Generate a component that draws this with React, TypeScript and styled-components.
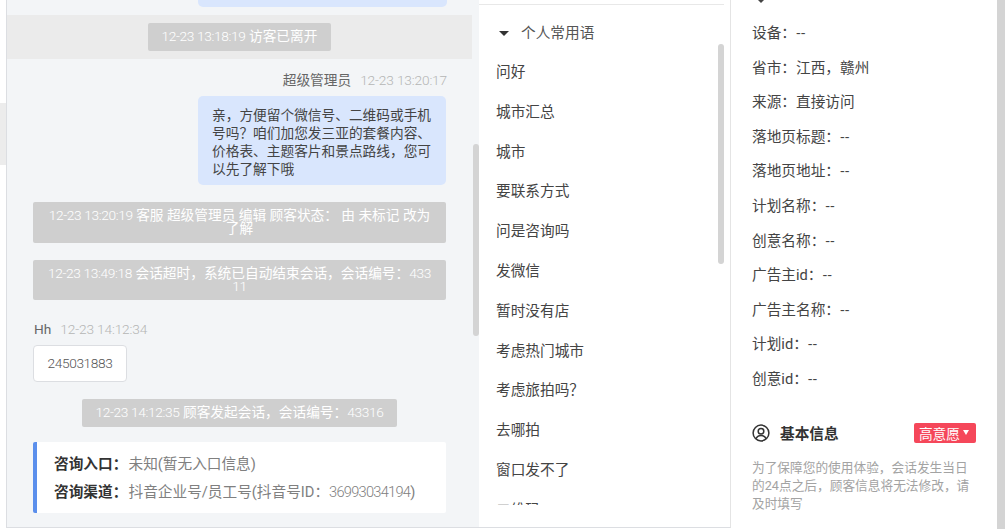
import React from 'react'
import styled, { createGlobalStyle } from 'styled-components'

const GlobalStyle = createGlobalStyle`
	html, body {
		margin: 0;
		padding: 0;
		background: #fff;
		overflow: hidden;
	}
	* {
		box-sizing: border-box;
	}
	body {
		font-family: Roboto, "Noto Sans CJK SC", sans-serif;
		font-size: 13.7px;
		color: #444;
	}
`

const PHRASES = [
	'问好',
	'城市汇总',
	'城市',
	'要联系方式',
	'问是咨询吗',
	'发微信',
	'暂时没有店',
	'考虑热门城市',
	'考虑旅拍吗？',
	'去哪拍',
	'窗口发不了',
	'二维码'
]

const VISITOR_INFO = [
	['设备', '--'],
	['省市', '江西，赣州'],
	['来源', '直接访问'],
	['落地页标题', '--'],
	['落地页地址', '--'],
	['计划名称', '--'],
	['创意名称', '--'],
	['广告主id', '--'],
	['广告主名称', '--'],
	['计划id', '--'],
	['创意id', '--']
]

const App = () => {
	return (
		<>
			<GlobalStyle />
			<S.Page>
				<S.Gutter>
					<S.GutterTab />
				</S.Gutter>

				<S.ChatPanel>
					<S.TopBubbleEnd />
					<S.NoticeBand>
						<S.Pill>
							<S.Stamp>12-23 13:18:19</S.Stamp> 访客已离开
						</S.Pill>
					</S.NoticeBand>

					<S.MetaRow $align="right">
						<S.Author>超级管理员</S.Author>
						<S.Time>12-23 13:20:17</S.Time>
					</S.MetaRow>
					<S.AgentBubble>
						亲，方便留个微信号、二维码或手机号吗？咱们加您发三亚的套餐内容、价格表、主题客片和景点路线，您可以先了解下哦
					</S.AgentBubble>

					<S.WideNotice>
						<S.Stamp>12-23 13:20:19</S.Stamp> 客服 超级管理员 编辑 顾客状态： 由 未标记 改为
						<br />
						了解
					</S.WideNotice>
					<S.WideNotice>
						<S.Stamp>12-23 13:49:18</S.Stamp> 会话超时，系统已自动结束会话，会话编号：<S.Stamp>433</S.Stamp>
						<br />
						<S.Stamp>11</S.Stamp>
					</S.WideNotice>

					<S.MetaRow $align="left">
						<S.Author>Hh</S.Author>
						<S.Time>12-23 14:12:34</S.Time>
					</S.MetaRow>
					<S.VisitorBubble>
						<S.Stamp>245031883</S.Stamp>
					</S.VisitorBubble>

					<S.CenterRow>
						<S.Pill>
							<S.Stamp>12-23 14:12:35</S.Stamp> 顾客发起会话，会话编号：<S.Stamp>43316</S.Stamp>
						</S.Pill>
					</S.CenterRow>

					<S.SourceCard>
						<S.SourceLine>
							<S.SourceLabel>咨询入口：</S.SourceLabel>未知(暂无入口信息)
						</S.SourceLine>
						<S.SourceLine>
							<S.SourceLabel>咨询渠道：</S.SourceLabel>抖音企业号/员工号(抖音号ID：
							<S.SourceDigits>36993034194</S.SourceDigits>)
						</S.SourceLine>
					</S.SourceCard>

					<S.ChatScrollbar />
				</S.ChatPanel>

				<S.PhrasePanel>
					<S.PhraseTopLine />
					<S.PhraseHeader>
						<S.Caret />
						个人常用语
					</S.PhraseHeader>
					<S.PhraseList>
						{PHRASES.map(phrase => (
							<S.PhraseItem key={phrase}>{phrase}</S.PhraseItem>
						))}
					</S.PhraseList>
					<S.PhraseScrollbar />
				</S.PhrasePanel>

				<S.InfoPanel>
					<S.CutIcon />
					{VISITOR_INFO.map(([label, value]) => (
						<S.InfoRow key={label}>
							{label}：<S.InfoValue>{value}</S.InfoValue>
						</S.InfoRow>
					))}
					<S.BasicHeader>
						<S.BasicTitle>
							<svg width="18" height="18" viewBox="0 0 18 18" fill="none" stroke="#333" strokeWidth="1.5">
								<circle cx="9" cy="9" r="7.9" />
								<circle cx="9" cy="7.2" r="2.8" />
								<path d="M3.9 14.8c.9-2.3 2.8-3.4 5.1-3.4s4.2 1.1 5.1 3.4" />
							</svg>
							基本信息
						</S.BasicTitle>
						<S.IntentBadge>
							高意愿
							<S.BadgeCaret />
						</S.IntentBadge>
					</S.BasicHeader>
					<S.Hint>为了保障您的使用体验，会话发生当日的24点之后，顾客信息将无法修改，请及时填写</S.Hint>
					<S.InfoScrollbar />
				</S.InfoPanel>
			</S.Page>
		</>
	)
}

export default App

const Page = styled.div`
	display: flex;
	width: 1005px;
	height: 529px;
	overflow: hidden;
	background: #fff;
`
const Gutter = styled.div`
	flex: 0 0 6px;
	padding-top: 103px;
`
const GutterTab = styled.div`
	height: 62px;
	background: #ececec;
`
const ChatPanel = styled.section`
	position: relative;
	flex: 0 0 473px;
	height: 528px;
	overflow: hidden;

	border-left: 1px solid #dcdee2;
	border-bottom: 1px solid #dcdee2;
	background: #f3f5f7;
`
const Stamp = styled.span`
	font-weight: 300;
	letter-spacing: -0.35px;
`
const TopBubbleEnd = styled.div`
	width: 249px;
	height: 7px;
	margin-left: 191px;
	border-radius: 0 0 5px 5px;
	background: #d9e6fd;
`
const NoticeBand = styled.div`
	display: flex;
	justify-content: center;
	width: 465px;
	height: 44px;
	margin-top: 8px;
	padding-top: 8px;
	background: #ebebeb;
`
const Pill = styled.div`
	height: 27.5px;
	padding: 0 13.5px;
	border-radius: 2px;
	background: #cfcfcf;
	color: #fff;
	line-height: 27px;
	white-space: nowrap;
`
const MetaRow = styled.div<{ $align: 'left' | 'right' }>`
	display: flex;
	justify-content: ${({ $align }) => ($align === 'right' ? 'flex-end' : 'flex-start')};
	gap: 9px;
	height: 20px;
	margin: 11px 32px 6px 27px;
	line-height: 20px;
`
const Author = styled.span`
	color: #666;
`
const Time = styled(Stamp)`
	color: #b5b5b5;
	letter-spacing: -0.15px;
`
const AgentBubble = styled.div`
	width: 248px;
	margin-left: 191px;
	padding: 10px 14px 7px;
	border-radius: 5px;
	background: #d9e6fd;
	color: #444;
	line-height: 18px;
`
const WideNotice = styled.div`
	width: 413px;
	height: 40.5px;
	margin: 17px 0 0 26px;
	padding: 7px 0 0;
	border-radius: 2px;
	background: #cfcfcf;
	color: #fff;
	line-height: 13px;
	text-align: center;
	white-space: nowrap;

	& + & {
		margin-bottom: 19px;
	}
`
const VisitorBubble = styled.div`
	width: 94px;
	height: 37px;
	margin-left: 26px;
	border: 1px solid #dcdee2;
	border-radius: 4px;
	background: #fff;
	color: #555;
	line-height: 35px;
	text-align: center;
`
const CenterRow = styled.div`
	display: flex;
	justify-content: center;
	width: 465px;
	margin-top: 17px;
`
const SourceCard = styled.div`
	display: flex;
	flex-direction: column;
	justify-content: center;
	gap: 8px;
	width: 413px;
	height: 71px;
	margin: 15.5px 0 0 26px;
	padding-left: 17px;
	border-left: 4px solid #5b8fec;
	border-radius: 2px;
	background: #fff;
`
const SourceLine = styled.div`
	color: #808080;
	font-size: 14.66px;
	line-height: 20px;
	white-space: nowrap;
`
const SourceLabel = styled.b`
	display: inline-block;
	width: 74.5px;
	color: #333;
	font-weight: 700;
`
const SourceDigits = styled(Stamp)`
	letter-spacing: -0.75px;
`
const ChatScrollbar = styled.div`
	position: absolute;
	top: 144px;
	right: 0;
	width: 6px;
	height: 192px;
	border-radius: 3px;
	background: #d4d4d4;
`
const PhrasePanel = styled.section`
	position: relative;
	flex: 0 0 252px;
	height: 528px;
	border-right: 1px solid #e4e4e4;
	border-bottom: 1px solid #dcdee2;
	background: #fff;
`
const PhraseTopLine = styled.div`
	width: 245px;
	height: 1px;
	margin-top: 4px;
	background: #e8e8e8;
`
const PhraseHeader = styled.div`
	display: flex;
	align-items: center;
	gap: 12px;
	height: 20px;
	margin: 18px 0 0 20px;
	color: #555;
	font-size: 14.66px;
	line-height: 20px;
`
const Caret = styled.i`
	width: 0;
	height: 0;
	border-style: solid;
	border-width: 5px 5px 0;
	border-color: #333 transparent transparent;
`
const PhraseList = styled.div`
	height: 451.5px;
	margin-top: 10px;
	padding-left: 17px;
	overflow: hidden;
`
const PhraseItem = styled.div`
	height: 39.8px;
	padding-top: 9px;
	color: #444;
	font-size: 14.66px;
	line-height: 20px;
`
const PhraseScrollbar = styled.div`
	position: absolute;
	top: 44px;
	left: 239px;
	width: 6px;
	height: 220px;
	border-radius: 3px;
	background: #d4d4d4;
`
const InfoPanel = styled.section`
	position: relative;
	flex: 1;
	height: 529px;
	padding: 15px 29px 0 21px;
	overflow: hidden;
	background: #fff;
`
const CutIcon = styled.i`
	position: absolute;
	top: 0;
	left: 27px;
	width: 0;
	height: 0;
	border-style: solid;
	border-width: 3px 3.5px 0;
	border-color: #444 transparent transparent;
`
const InfoRow = styled.div`
	height: 34.6px;
	color: #444;
	font-size: 14.66px;
	line-height: 34px;
	white-space: nowrap;
`
const InfoValue = styled.span`
	font-family: "Open Sans", "Noto Sans CJK SC", sans-serif;
`
const BasicHeader = styled.div`
	display: flex;
	justify-content: space-between;
	align-items: center;
	height: 20px;
	margin-top: 27px;
`
const BasicTitle = styled.div`
	display: flex;
	align-items: center;
	gap: 10px;
	color: #333;
	font-size: 14.66px;
	font-weight: 700;
`
const IntentBadge = styled.div`
	display: flex;
	align-items: center;
	gap: 3px;
	height: 20px;
	padding: 0 7px 0 5px;
	border-radius: 2px;
	background: #f5475a;
	color: #fff;
	white-space: nowrap;
`
const BadgeCaret = styled.i`
	width: 0;
	height: 0;
	border-style: solid;
	border-width: 5px 3.5px 0;
	border-color: #fff transparent transparent;
`
const Hint = styled.p`
	margin: 16px 0 0;
	color: #a3a3a3;
	font-size: 12.7px;
	line-height: 18px;
`
const InfoScrollbar = styled.div`
	position: absolute;
	top: 0;
	right: 0;
	width: 8px;
	height: 529px;
	background: #d4d4d4;
`

const S = {
	Page,
	Gutter,
	GutterTab,
	ChatPanel,
	Stamp,
	TopBubbleEnd,
	NoticeBand,
	Pill,
	MetaRow,
	Author,
	Time,
	AgentBubble,
	WideNotice,
	VisitorBubble,
	CenterRow,
	SourceCard,
	SourceLine,
	SourceLabel,
	SourceDigits,
	ChatScrollbar,
	PhrasePanel,
	PhraseTopLine,
	PhraseHeader,
	Caret,
	PhraseList,
	PhraseItem,
	PhraseScrollbar,
	InfoPanel,
	CutIcon,
	InfoRow,
	InfoValue,
	BasicHeader,
	BasicTitle,
	IntentBadge,
	BadgeCaret,
	Hint,
	InfoScrollbar
}
